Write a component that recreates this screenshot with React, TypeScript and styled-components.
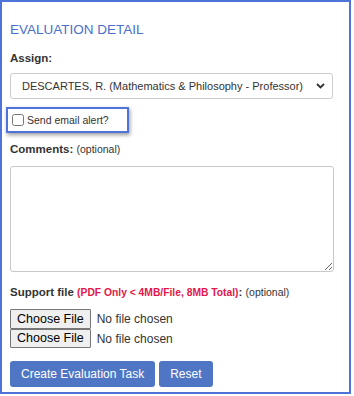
import React from 'react';
import styled, { createGlobalStyle } from 'styled-components';

const GlobalStyle = createGlobalStyle`
  html, body {
    margin: 0;
    padding: 0;
    background: #ffffff;
  }

  body {
    font-family: 'Liberation Sans', Arial, sans-serif;
    color: #333333;
  }
`;

const Frame = styled.div`
  box-sizing: border-box;
  width: 351px;
  height: 394px;
  border: 2px solid #4f74d9;
  padding: 20px 0 6px 8px;
`;

const Title = styled.h3`
  margin: 0 0 14px;
  font-size: 13.5px;
  line-height: 15px;
  font-weight: 400;
  color: #4a70c9;
`;

const Label = styled.div<{ $gap: number }>`
  margin-bottom: ${(p) => p.$gap}px;
  font-size: 11.5px;
  line-height: 14px;
  font-weight: 700;
  color: #333333;

  .optional {
    font-size: 10.5px;
    font-weight: 400;
  }

  .limit {
    font-size: 10.3px;
    color: #e3174a;
  }
`;

const SelectWrap = styled.div`
  position: relative;
  width: 323px;
  height: 26px;

  svg {
    position: absolute;
    right: 8px;
    top: 10px;
    pointer-events: none;
  }
`;

const Select = styled.select`
  appearance: none;
  box-sizing: border-box;
  width: 100%;
  height: 26px;
  padding: 0 24px 0 11px;
  border: 1px solid #cccccc;
  border-radius: 3px;
  background: #ffffff;
  font-family: 'Liberation Sans', Arial, sans-serif;
  font-size: 11px;
  color: #333333;
  outline: none;
`;

const AlertBox = styled.label`
  box-sizing: border-box;
  display: flex;
  align-items: center;
  width: 123px;
  height: 26px;
  margin: 8px 0 9px -4px;
  padding-left: 4px;
  border: 2px solid #4f74d9;
  box-shadow: 1px 2px 4px rgba(0, 0, 0, 0.4);
  font-size: 10.5px;
  color: #333333;

  input {
    width: 12px;
    height: 12px;
    margin: 0 3px 0 0;
  }
`;

const Comments = styled.textarea`
  box-sizing: border-box;
  display: block;
  width: 324px;
  height: 106px;
  margin: 0 0 13px;
  border: 1px solid #c8c8c8;
  border-radius: 3px;
  resize: vertical;
  outline: none;
`;

const FileList = styled.div`
  display: flex;
  flex-direction: column;
  margin-bottom: 13px;
`;

const FileInput = styled.input`
  height: 19.5px;
  font-family: 'Liberation Sans', Arial, sans-serif;
  font-size: 12px;
  color: #333333;

  &::file-selector-button {
    box-sizing: border-box;
    height: 19.5px;
    margin: 0 6px 0 0;
    padding: 0 6px;
    border: 1px solid #767676;
    border-radius: 1px;
    background: #efefef;
    font-family: 'Liberation Sans', Arial, sans-serif;
    font-size: 12.5px;
    color: #000000;
  }
`;

const Actions = styled.div`
  display: flex;
  gap: 4px;
`;

const Button = styled.button`
  height: 26px;
  padding: 0 11px;
  border: none;
  border-radius: 3px;
  background: #4f76c5;
  font-family: 'Liberation Sans', Arial, sans-serif;
  font-size: 12px;
  color: #ffffff;
`;

const Chevron = () => (
  <svg width="9" height="6" viewBox="0 0 9 6">
    <path d="M1 1l3.5 3.5L8 1" fill="none" stroke="#333" strokeWidth="1.8" />
  </svg>
);

const App = () => {
  return (
    <>
      <GlobalStyle />
      <Frame>
        <Title>EVALUATION DETAIL</Title>

        <Label $gap={8}>Assign:</Label>
        <SelectWrap>
          <Select defaultValue="descartes">
            <option value="descartes">DESCARTES, R. (Mathematics &amp; Philosophy - Professor)</option>
          </Select>
          <Chevron />
        </SelectWrap>

        <AlertBox>
          <input type="checkbox" />
          Send email alert?
        </AlertBox>

        <Label $gap={10}>
          Comments: <span className="optional">(optional)</span>
        </Label>
        <Comments />

        <Label $gap={9}>
          Support file <span className="limit">(PDF Only &lt; 4MB/File, 8MB Total)</span>:{' '}
          <span className="optional">(optional)</span>
        </Label>
        <FileList>
          <FileInput type="file" />
          <FileInput type="file" />
        </FileList>

        <Actions>
          <Button>Create Evaluation Task</Button>
          <Button>Reset</Button>
        </Actions>
      </Frame>
    </>
  );
};

export default App;
